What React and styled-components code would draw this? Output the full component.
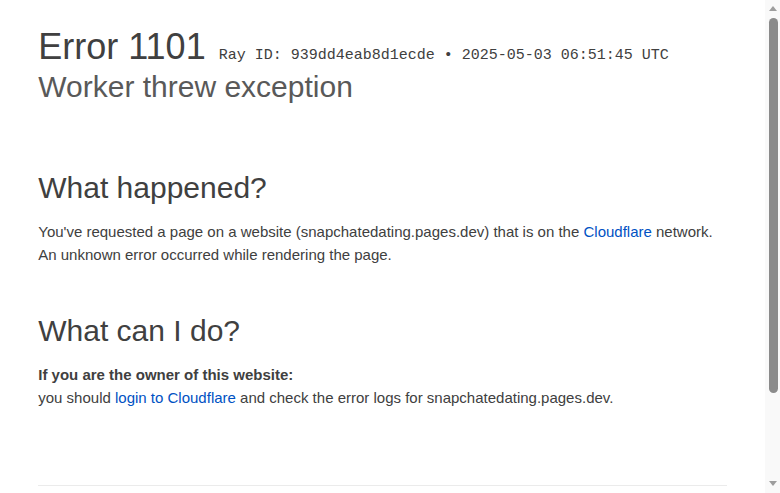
import React from 'react';
import styled, { createGlobalStyle } from 'styled-components';

const GlobalStyle = createGlobalStyle`
  html, body {
    margin: 0;
    padding: 0;
    background: #fff;
    overflow: hidden;
  }
  body {
    font-family: "Liberation Sans", Arial, sans-serif;
    color: #404040;
    font-size: 15px;
    line-height: 1.5;
  }
`;

const Viewport = styled.div`
  display: flex;
  height: 100vh;
`;

const Page = styled.main`
  flex: 1;
  min-width: 0;
  overflow: hidden;
`;

const Scrollbar = styled.div`
  width: 15px;
  flex-shrink: 0;
  background: #f9f9f9;
  display: grid;
  grid-template-rows: 12px 1fr 12px;
  justify-items: center;
`;

const ArrowButton = styled.div`
  width: 15px;
  height: 12px;
  display: flex;
  justify-content: center;
  align-items: ${p => (p.$down ? 'flex-start' : 'flex-end')};
  padding-left: 1px;
  box-sizing: border-box;
`;

const Triangle = styled.span`
  display: block;
  width: 0;
  height: 0;
  border-left: 4px solid transparent;
  border-right: 4px solid transparent;
  ${p => (p.$down
    ? 'border-top: 5px solid #9d9d9d;'
    : 'border-bottom: 5px solid #9d9d9d; margin-bottom: 1px;')}
`;

const Track = styled.div`
  width: 15px;
  display: flex;
  justify-content: center;
  padding: 6px 0 0 1px;
  box-sizing: border-box;
`;

const Thumb = styled.div`
  width: 9px;
  height: 375px;
  border-radius: 5px;
  background: #8b8b8b;
`;

const Wrapper = styled.div`
  width: 90%;
  margin: 0 auto;
`;

const Header = styled.header`
  padding-top: 25px;
`;

const Title = styled.h1`
  margin: 0;
  font-size: 36px;
  font-weight: 400;
  line-height: 1.2;
  color: #404040;
`;

const RayId = styled.small`
  margin-left: 3px;
  font-family: "Liberation Mono", "Courier New", monospace;
  font-size: 15px;
  font-weight: 400;
  color: #404040;
  white-space: nowrap;
`;

const Subheadline = styled.h2`
  margin: 0;
  font-size: 30px;
  font-weight: 400;
  line-height: 38px;
  color: #595959;
`;

const Section = styled.section`
  padding-top: ${p => p.$top}px;
`;

const SectionTitle = styled.h2`
  margin: 0 0 13px;
  font-size: 30px;
  font-weight: 400;
  line-height: 39px;
  color: #404040;
`;

const Paragraph = styled.p`
  margin: 0;
  font-size: 15px;
  line-height: 23px;
`;

const Link = styled.a`
  color: #0051c3;
  text-decoration: none;
`;

const Footer = styled.footer`
  margin-top: 76px;
  border-top: 1px solid #ebebeb;
  padding: 14px 0 100px;
  text-align: center;
  font-size: 13px;
  color: #404040;
`;

const Sep = styled.span`
  margin: 0 6px;
`;

export default function App() {
  return (
    <>
      <GlobalStyle />
      <Viewport>
        <Page>
          <Wrapper>
            <Header>
              <Title>
                Error 1101{' '}
                <RayId>Ray ID: 939dd4eab8d1ecde &bull; 2025-05-03 06:51:45 UTC</RayId>
              </Title>
              <Subheadline>Worker threw exception</Subheadline>
            </Header>

            <Section $top={62}>
              <SectionTitle>What happened?</SectionTitle>
              <Paragraph>
                You've requested a page on a website (snapchatedating.pages.dev) that is on the{' '}
                <Link href="#">Cloudflare</Link> network. An unknown error occurred while rendering the page.
              </Paragraph>
            </Section>

            <Section $top={45}>
              <SectionTitle>What can I do?</SectionTitle>
              <Paragraph>
                <strong>If you are the owner of this website:</strong>
                <br />
                you should <Link href="#">login to Cloudflare</Link> and check the error logs for
                snapchatedating.pages.dev.
              </Paragraph>
            </Section>

            <Footer>
              Cloudflare Ray ID: <strong>939dd4eab8d1ecde</strong>
              <Sep>&bull;</Sep>
              Your IP: <Link href="#">Click to reveal</Link>
              <Sep>&bull;</Sep>
              Performance &amp; security by <Link href="#">Cloudflare</Link>
            </Footer>
          </Wrapper>
        </Page>
        <Scrollbar>
          <ArrowButton>
            <Triangle />
          </ArrowButton>
          <Track>
            <Thumb />
          </Track>
          <ArrowButton $down>
            <Triangle $down />
          </ArrowButton>
        </Scrollbar>
      </Viewport>
    </>
  );
}
